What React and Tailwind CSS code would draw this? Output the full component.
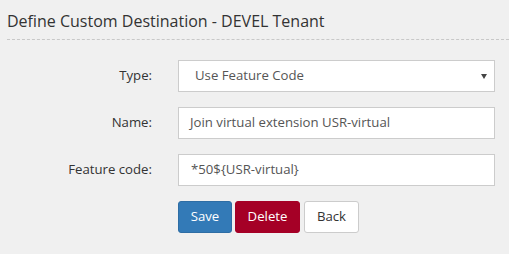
export default function App() {
  const font = { fontFamily: '"Open Sans", sans-serif' };
  return (
    <div className="w-[509px] h-[254px] bg-[#f0f0f0] overflow-hidden" style={font}>
      <div className="pl-[7px] pt-[9px]">
        <h1 className="text-[16px] leading-[24px] text-[#333] font-normal">Define Custom Destination - DEVEL Tenant</h1>
        <div className="mt-[6px] border-b border-dashed border-[#c8c8c8]" />
      </div>
      <div className="mt-[20px] flex flex-col gap-[15px]">
        <div className="flex items-center">
          <label className="w-[152px] text-right text-[13.2px] text-[#333]">Type:</label>
          <div className="ml-[26px] w-[317px] h-[32px] bg-white border border-[#ccc] flex items-center pl-[16px] pr-[6px] text-[13.2px] text-[#555]">
            <span className="flex-1">Use Feature Code</span>
            <svg width="6" height="5" viewBox="0 0 6 5" className="mr-[1px]"><path d="M0 0H6L3 5Z" fill="#444" /></svg>
          </div>
        </div>
        <div className="flex items-center">
          <label className="w-[152px] text-right text-[13.2px] text-[#333]">Name:</label>
          <div className="ml-[26px] w-[317px] h-[32px] bg-white border border-[#ccc] flex items-center pl-[11px] text-[13.2px] text-[#555]">
            Join virtual extension USR-virtual
          </div>
        </div>
        <div className="flex items-center">
          <label className="w-[152px] text-right text-[13.2px] text-[#333]">Feature code:</label>
          <div className="ml-[26px] w-[317px] h-[32px] bg-white border border-[#ccc] flex items-center pl-[12px] text-[13.2px] text-[#555]">
            *50{'${USR-virtual}'}
          </div>
        </div>
        <div className="flex items-center pl-[178px] gap-[3px]">
          <button className="h-[32px] w-[54px] bg-[#337ab7] border border-[#2e6da4] rounded-[3px] text-white text-[13.2px]">Save</button>
          <button className="h-[32px] w-[65px] bg-[#a50026] border border-[#a50026] rounded-[3px] text-white text-[13.2px]">Delete</button>
          <button className="h-[32px] w-[55px] ml-[1px] bg-white border border-[#ccc] rounded-[3px] text-[#333] text-[13.2px]">Back</button>
        </div>
      </div>
    </div>
  );
}
